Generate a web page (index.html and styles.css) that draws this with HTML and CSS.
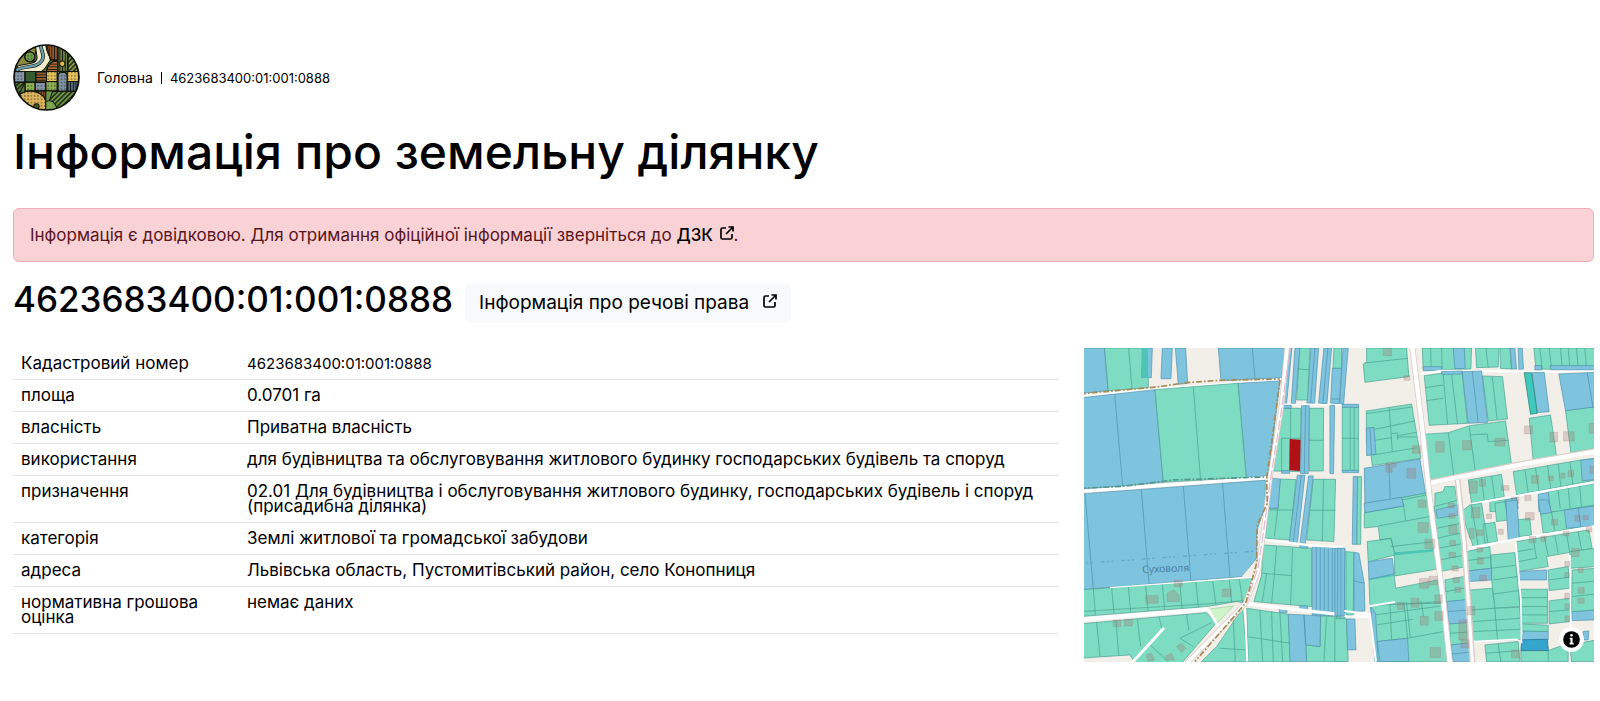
FILE: index.html
```html
<!DOCTYPE html>
<html lang="uk">
<head>
<meta charset="utf-8">
<title>Інформація про земельну ділянку</title>
<link rel="stylesheet" href="styles.css">
</head>
<body>
<svg class="defs" aria-hidden="true">
  <symbol id="external" viewBox="0 0 14 14"><path d="M6 2H2.500Q1 2 1 3.500V11.500Q1 13 2.500 13H10.500Q12 13 12 11.500V8M8.500 1H13V5.500M13 1L6 8" fill="none" stroke="currentColor" stroke-width="1.700"/></symbol>
</svg>
<header class="top">
  <a class="logo" href="#" aria-label="Головна сторінка">
    <svg viewBox="0 0 200 200">
      <defs>
        <clipPath id="disc"><circle cx="100" cy="100" r="97"/></clipPath>
        <pattern id="v" width="8" height="8" patternUnits="userSpaceOnUse"><path d="M4 0V8" stroke="#15180f" stroke-width="3"/></pattern>
        <pattern id="h" width="8" height="8" patternUnits="userSpaceOnUse"><path d="M0 4H8" stroke="#15180f" stroke-width="3"/></pattern>
        <pattern id="d" width="10" height="10" patternUnits="userSpaceOnUse" patternTransform="rotate(45)"><path d="M5 0V10" stroke="#15180f" stroke-width="4"/></pattern>
        <pattern id="p" width="10" height="10" patternUnits="userSpaceOnUse"><circle cx="5" cy="5" r="2" fill="#2a2f22"/></pattern>
      </defs>
      <g clip-path="url(#disc)" stroke="#14170f" stroke-width="3">
        <rect width="200" height="200" fill="#5b7a38"/>
        <path d="M0 80L30 20L70 10L60 60Z" fill="#8a8a3c"/>
        <circle cx="50" cy="38" r="15" fill="#6d9a48"/><circle cx="50" cy="38" r="15" fill="url(#p)"/>
        <path d="M66 0H100C94 18 112 32 112 48C100 62 98 80 80 84H8L14 66C38 54 70 66 72 40Z" fill="#f3ebcd"/>
        <path d="M84 0C80 20 98 30 86 50C70 74 40 62 10 78" fill="none" stroke="#14170f" stroke-width="11"/>
        <path d="M84 0C80 20 98 30 86 50C70 74 40 62 10 78" fill="none" stroke="#6c9fae" stroke-width="7"/>
        <path d="M100 0H134V48H112C110 32 94 20 100 0" fill="#a65d2e"/><path d="M100 0H134V48H112Z" fill="url(#v)"/>
        <path d="M100 82Q104 52 134 48V82Z" fill="#b56b35"/><path d="M100 82Q104 52 134 48V82Z" fill="url(#h)"/>
        <path d="M134 0H164V82H134Z" fill="#6f8545"/><path d="M134 0H164V82H134Z" fill="url(#v)"/><circle cx="147" cy="59" r="8" fill="#e0b850"/>
        <path d="M164 20L200 50V82H164Z" fill="#8c9a4a"/><path d="M164 20L200 50V82H164Z" fill="url(#d)"/>
        <path d="M0 82H36V114H0ZM66 114H98V140H66Z" fill="#8794ab"/><path d="M36 82H68V114H36Z" fill="#355c30"/>
        <path d="M68 82H100V114H68Z" fill="#9a6233"/><path d="M68 82H100V114H68Z" fill="url(#h)"/>
        <path d="M100 82H132V112H100ZM162 82H200V112H162Z" fill="#e7c25d"/>
        <path d="M36 114H66V140H36ZM98 112H132V140H98Z" fill="#8eb156"/>
        <path d="M0 82H36V114H0ZM36 114H66V140H36ZM66 114H98V140H66ZM98 112H132V140H98ZM100 82H132V112H100ZM162 82H200V112H162Z" fill="url(#p)"/>
        <rect x="134" y="84" width="28" height="62" rx="12" fill="#7c91a3"/><rect x="134" y="84" width="28" height="62" rx="12" fill="url(#p)"/>
        <path d="M162 112H200V142H162Z" fill="#55697d"/><path d="M162 112H200V142H162Z" fill="url(#v)"/>
        <path d="M70 140H98V165L70 148Z" fill="#a65d2e"/><path d="M70 140H98V165L70 148Z" fill="url(#v)"/>
        <path d="M0 114H36L20 146H0Z" fill="url(#d)"/>
        <path d="M20 150C54 128 98 148 98 176V200H30Z" fill="#dcb25a"/><path d="M20 150C54 128 98 148 98 176V200H30Z" fill="url(#p)"/>
        <circle cx="70" cy="186" r="8" fill="#425b2a"/>
        <path d="M98 140H200V200H98Z" fill="#6d9645"/><path d="M118 142H200V200H98Z" fill="url(#d)"/>
        <path d="M98 172Q122 160 134 200H98Z" fill="#7ba650"/>
      </g>
      <circle cx="100" cy="100" r="97" fill="none" stroke="#0b0d08" stroke-width="5"/>
    </svg>
  </a>
  <nav class="crumbs" aria-label="Навігація"><a href="#">Головна</a><span class="bar"></span><a class="code" href="#">4623683400:01:001:0888</a></nav>
</header>
<main>
  <h1>Інформація про земельну ділянку</h1>
  <div class="alert" role="alert">Інформація є довідковою. Для отримання офіційної інформації зверніться до <a href="#">ДЗК <svg class="ext"><use href="#external"/></svg></a>.</div>
  <div class="heading">
    <h2>4623683400:01:001:0888</h2>
    <a class="btn" href="#">Інформація про речові права <svg class="ext"><use href="#external"/></svg></a>
  </div>
  <div class="columns">
    <table class="info">
      <tbody>
      <tr><th scope="row">Кадастровий номер</th><td class="code">4623683400:01:001:0888</td></tr>
      <tr><th scope="row">площа</th><td>0.0701 га</td></tr>
      <tr><th scope="row">власність</th><td>Приватна власність</td></tr>
      <tr><th scope="row">використання</th><td>для будівництва та обслуговування житлового будинку господарських будівель та споруд</td></tr>
      <tr><th scope="row">призначення</th><td>02.01 Для будівництва і обслуговування житлового будинку, господарських будівель і споруд (присадибна ділянка)</td></tr>
      <tr><th scope="row">категорія</th><td>Землі житлової та громадської забудови</td></tr>
      <tr><th scope="row">адреса</th><td>Львівська область, Пустомитівський район, село Конопниця</td></tr>
      <tr><th scope="row">нормативна грошова оцінка</th><td>немає даних</td></tr>
      </tbody>
    </table>
    <div class="map">
      <svg class="plan" viewBox="0 0 1530 942" preserveAspectRatio="xMidYMid slice" role="img" aria-label="Карта ділянки">
        <rect width="1530" height="942" fill="#f2efe9"/>
        <!-- north-west -->
        <g transform="translate(-12 -9)">
          <path class="g" d="M73 9H200L205 100V128L84 137ZM146 9L156 131"/>
          <path class="b" d="M0 9H73L84 137L0 146ZM187 9H217L214 98L185 97ZM247 9H277L273 101H243ZM286 9H317L323 115L295 118ZM415 9H615L606 98L423 107ZM517 9L525 102"/>
          <path class="t" d="M187 9H203L205 98H185Z"/>
          <path class="road" d="M0 151L605 104" stroke-width="8"/>
          <path class="b" d="M0 159L225 134L250 412L128 423L0 432ZM104 147L128 423M474 115L600 108L565 393L499 398Z"/>
          <path class="g" d="M225 134L474 115L499 398L250 412ZM340 124L362 408"/>
          <path class="road" d="M0 440L567 398" stroke-width="9"/>
          <path class="b" d="M0 447L556 406L556 480L530 560V640L486 695L92 727L0 735ZM15 447L40 733M184 434L207 715M310 424L333 706M428 415L450 697"/>
          <path class="border" d="M0 147L230 126L320 113L420 106L600 102"/>
          <path class="border2" d="M0 430L130 424L280 405L560 396"/>
          <path class="fence" d="M0 656L520 619"/>
          <text class="place" x="187" y="684" transform="rotate(-2 187 684)">Суховоля</text>
          <path class="b" d="M622 9H636L620 175H608ZM645 9H660L646 178L634 176ZM693 9H716L704 175L681 174ZM705 9L692 174M732 9H755L741 176L716 174ZM744 9L729 175M757 70H785L778 176L752 174ZM755 162H780"/>
          <path class="g" d="M660 9H690L683 165H650ZM653 72L687 74M762 9H785V70H759Z"/>
          <path class="road" d="M600 178L790 180" stroke-width="5"/>
          <path class="g" d="M605 190H663L660 380L580 378L595 280ZM632 190V280M605 280V378M605 280H662M688 190H731L730 378H688ZM688 286H731"/>
          <path class="b" d="M665 182H688L685 386H662ZM677 182L673 386M750 181H764L761 386H750ZM610 181H634V190H610ZM605 377H629V385H605Z"/>
          <path d="M629 282L662 284L660 378L628 376Z" fill="#b11116"/>
          <path class="g" d="M601 402L648 404L630 585L556 580L565 490L594 490ZM594 490L583 575M558 495H640M700 403H767L762 590L680 585ZM731 403L727 590M690 496H767"/>
          <path class="b" d="M572 400L601 402L594 490H562ZM652 391H675L652 595L628 592ZM664 391L640 593M686 393H700L676 597L660 595Z"/>
        </g>
        <!-- south-west -->
        <g transform="translate(-12 456)">
          <path class="g" d="M550 135L695 145V320L522 305L545 225ZM590 140L583 225L575 310M638 145L632 315M545 220L635 227M560 222L547 305"/>
          <path class="b" d="M697 137L795 147V350L697 345ZM709 138V345M721 139V346M733 140V347M745 141V348M757 142V348M769 143V349M782 144V349M660 133H683V144H660ZM598 323H621V338H598ZM660 318H683V333H660Z"/>
          <path class="g" d="M0 270L525 233L500 310L470 305L380 320L0 350ZM40 267L46 345M95 263L102 340M145 260L152 336M197 256L204 333M247 252L254 330M300 249L306 326M348 245L355 322M398 242L408 316M448 239L455 307M478 237L488 307M0 335L380 312M380 312L495 302"/>
          <path class="road" d="M90 263L450 237L525 232" stroke-width="4"/>
          <path d="M487 228L530 178L522 233Z" fill="#f2efe9"/>
          <path d="M385 328L460 318L410 372Z" fill="#cdf5c8" stroke="#a6cfa4" stroke-width="2"/>
          <path class="g" d="M0 372L380 338L408 370L305 490H165L150 465L0 475ZM50 366L60 470M108 361L116 467M172 356L182 440M237 350L245 385M320 344L327 392M395 368L300 415M300 415L340 440M205 430L265 485"/>
          <path class="g" d="M488 325L503 485H365L410 440ZM460 360L466 485M418 445L500 450"/>
          <path class="g" d="M500 325L625 343L632 485H505ZM540 330L548 485M575 335L580 485M600 340L608 485M500 410L632 430M678 435L720 440L722 348L795 352V485H680ZM740 350L732 485M770 350L765 485"/>
          <path class="b" d="M625 343L672 345L680 485H630ZM672 345L722 348L720 440L678 435Z"/>
          <path class="road" d="M0 360L385 328" stroke-width="12"/>
          <path class="road" d="M553 119L690 136L790 142" stroke-width="7"/>
          <path class="road" d="M500 312L790 345L870 350" stroke-width="10"/>
          <path class="road" d="M495 320L502 485" stroke-width="6"/>
          <path class="road" d="M252 384L155 490" stroke-width="9"/>
          <path class="road" d="M385 328L415 380" stroke-width="8"/>
          <path class="case" d="M622 -465L605 -285L570 -65L550 100L535 210L497 310L320 490" stroke-width="16"/>
          <path class="road" d="M622 -465L605 -285L570 -65L550 100L535 210L497 310L320 490" stroke-width="11"/>
          <path class="pink" d="M632 -465L604 -265L570 -50L550 100L535 200L500 310"/>
          <path class="border" d="M600 -360L575 -170L560 -65L562 10L532 75L530 190L497 310L345 485"/>
          <path class="house" d="M197 287H234V310H197ZM262 280L280 270L298 285V305H262ZM283 240H307V260H283ZM427 268H454V290H427ZM100 360H122V380H100ZM134 358H157V378H134ZM290 440L305 430L318 446L304 458ZM198 465L215 460L224 480L205 485ZM257 468L275 460L284 480H260Z"/>
        </g>
        <!-- north-east -->
        <g transform="translate(753 -9)">
          <path class="b" d="M24 9H40L26 178L15 176Z"/>
          <path class="g" d="M95 9H215L222 95L90 112L85 57L95 50ZM90 54L218 40M22 186H71V378H22ZM46 180V383M58 180V383M22 280H71M94 198L230 177L258 340L112 362L108 330L95 290ZM94 206L232 186M163 187L172 320M95 258L240 228M95 290L170 278M170 266L188 264V284M188 276L245 276M190 272L245 262M115 330L247 308"/>
          <path class="b" d="M22 178H71V187H22ZM22 376H71V383H22ZM94 250L117 247L123 328L95 332ZM105 249L110 330M88 370L255 342L272 445L90 478ZM162 358L166 460M55 395H68L66 598H52Z"/>
          <path class="g" d="M68 395H80L77 598H66ZM90 478L200 458L272 445L276 490H200L90 502ZM200 458L210 500"/>
          <path class="g" d="M262 9H410L408 72L265 75ZM287 9L289 72M320 9L322 72M422 9H492L490 66L425 68ZM453 9L460 67M495 9H525L530 72L497 70ZM597 9H785V75L603 72ZM615 9L622 72M643 9L650 72M677 9L682 72M700 9L705 72M725 9L730 72M750 9L755 72"/>
          <path class="b" d="M355 9H388L391 70L360 71ZM265 65H320V77H265ZM527 9H540L545 72H530ZM550 9H562L566 72L552 73ZM645 62H785V75H650ZM600 62H620V75H600Z"/>
          <path class="road" d="M258 86L320 77L600 80L785 79" stroke-width="6"/>
          <path class="g" d="M268 92L320 85H382L398 235L283 241ZM325 90L338 237M350 88L368 238M270 128L325 120M275 167L325 160M443 93L503 95L518 222L460 228ZM472 95L487 225M583 220L647 210L665 333L595 346ZM692 197L785 184V310L708 323ZM268 268L340 263L405 242L512 228L530 360L285 412ZM340 263L357 395M403 245L422 385M405 270L457 267M457 267L460 290M460 290L522 286"/>
          <path class="b" d="M320 80L382 78V87L320 89ZM382 80L440 78L458 232L400 235ZM412 78L430 234M592 83L628 82L643 200L607 203ZM672 87L785 82V185L692 197ZM757 83L775 190"/>
          <path d="M568 83L590 83L607 205L587 208Z" fill="#3fc9bc" stroke="#23756e" stroke-width="2"/>
          <path class="g" d="M400 405L500 388L508 455L410 475ZM440 398L448 468M470 393L480 460M535 380L738 345L785 340V405L545 450ZM570 374L580 443M602 369L612 437M638 362L648 430M670 357L678 425M705 351L714 419M300 445L325 440L330 425L360 425L372 500H300ZM465 470L545 458V500H465ZM640 440L785 415V500H645ZM670 436L676 490M700 430L706 490M735 424L740 490"/>
          <path class="b" d="M738 346L785 340V403L742 408ZM610 448L640 442L648 500H612ZM510 465L545 459L550 490H512Z"/>
          <path class="case" d="M287 412L540 360L785 317" stroke-width="17"/>
          <path class="road" d="M287 414L540 362L785 319" stroke-width="13"/>
          <path class="road" d="M410 477L785 411" stroke-width="7"/>
          <path class="house" d="M145 10H170V32H145ZM207 92H225V106H207ZM233 302H258V325H233ZM153 354H184V366L172 368V382H153ZM216 371H243V400H216ZM303 290H328V322H303ZM383 287H409V315H383ZM480 280H510V303H480ZM569 243H593V266H569ZM645 262H668V291H645ZM686 260H718V288H686ZM763 235H790V265H763ZM403 408H427V445H403ZM434 404H452V424H434ZM590 392H611V415H590ZM570 450H588V467H570ZM500 422H522V436H500ZM640 394H655V407H640ZM700 377H716V395H700ZM530 456H552V475H530ZM678 385H690V400H678ZM765 363H785V385H765ZM250 465H272V490H250Z"/>
        </g>
        <!-- south-east -->
        <g transform="translate(753 456)">
          <path class="g" d="M88 38L208 18L200 0L275 -15L303 150L180 160L168 115L135 120L130 80L88 84ZM206 18L212 60M130 78L295 48M168 140L300 125M97 125L168 115L180 165L100 186ZM178 160L300 150L305 208L180 228ZM102 238L178 225L182 265L308 240L318 310L105 314ZM107 318L320 305L345 485H125ZM122 345L320 318M165 310L170 418M207 306L218 415M215 306L226 412M258 302L266 350M125 375L235 358M125 425L218 415M218 415L325 395M33 155L57 157L55 345H33ZM0 355L35 357L40 485H0Z"/>
          <path class="t" d="M178 158L300 148V154L178 167ZM102 234L178 222V228L102 240Z"/>
          <path class="b" d="M88 10L200 -8L206 18L90 38ZM100 186L172 175L178 222L102 238ZM107 320L122 340L130 485H120ZM127 425L218 415L222 485H135ZM57 157L72 160L88 250L90 333L57 335ZM57 243L88 250M35 357L60 358L63 450L38 450ZM0 145H30L28 348H0ZM8 145V348M18 145V348"/>
          <path class="g" d="M298 20L370 0L395 200L315 215ZM305 85L378 70M308 115L383 98M312 145L388 130M315 180L392 165M330 240L398 228L405 300L335 305ZM333 275L402 262M345 370L408 367L410 430L345 435ZM345 400L410 396"/>
          <path class="b" d="M303 30L368 15L370 45L308 55ZM335 305L405 298L410 367L342 372ZM338 335L408 330M348 435L412 428L415 485H355ZM352 462L414 456"/>
          <path class="g" d="M380 35L405 15L440 10L460 135L415 140L395 85ZM410 15L430 138M445 72L480 67L488 125L450 130ZM480 10L510 5L520 60L485 65ZM545 60L585 55L590 105L553 110ZM617 42L780 15V75L625 100ZM650 37L660 90M545 125L762 90L772 145L635 170L640 200L550 215ZM595 115L605 175M628 110L640 168M660 107L670 160M695 101L704 155M730 96L740 148M545 155L595 147M550 185L605 175M395 155L465 140L470 205L400 213ZM397 182L468 172M467 165L540 158L555 320L480 325L470 240ZM470 205L542 196M474 240L548 230M478 282L552 272"/>
          <path class="b" d="M513 5L547 0L553 115L520 120ZM610 0H640L650 38L617 42ZM688 30L780 18V78L695 85ZM730 25L738 82M400 213L470 205V240L403 245ZM550 215L635 210V240H550ZM565 393L640 395V420H562ZM710 335L785 330V360L712 362ZM745 395L762 393L760 420H745Z"/>
          <path class="g" d="M405 270L472 265L480 325L555 322L560 418L415 425ZM410 330L480 325M480 325L488 422M413 365L557 355M415 395L558 388M553 268H638V370H558ZM553 293H638M556 320H638M557 345H638M555 372L640 376V395L560 393ZM640 210L700 200L705 265L643 272ZM641 240L703 232M643 303L705 295V365L643 372ZM643 335L705 330M705 155L785 145V200L705 205ZM712 210L785 205V330L710 335ZM712 250L785 243M712 290L785 282M450 435L550 425L555 485H455ZM490 430L498 485M453 460L552 452M558 452L640 452L700 430V485H558ZM640 440V485M705 435L785 420V485H710Z"/>
          <path d="M560 420L638 418L640 452H558Z" fill="#36a5cd" stroke="#23718f" stroke-width="2"/>
          <path class="road" d="M400 145L560 115L785 78" stroke-width="7"/>
          <path class="road" d="M543 125L558 300L560 430M705 165L708 440M415 425L550 418" stroke-width="5"/>
          <path class="road" d="M28 333L105 342L123 485M105 318L180 306" stroke-width="6"/>
          <path class="case" d="M232 -460L262 -215L285 0L325 300L345 490M368 -62L388 130L413 490" stroke-width="18"/>
          <path class="road" d="M232 -460L262 -215L285 0L325 300L345 490" stroke-width="13"/>
          <path class="road" d="M368 -62L388 130L413 490" stroke-width="9"/>
          <path class="house" d="M250 0H274V22H250ZM250 68H280V98H250ZM270 118H300V146H270ZM254 236H281V265H254ZM283 229H308V255H283ZM228 295H252V322H228ZM187 308H207V328H187ZM300 285H322V310H300ZM300 335H325V362H300ZM256 350H280V376H256ZM286 443H317V473H286ZM340 10H358V24H340ZM342 40H360V55H342ZM342 75H366V102H342ZM345 122H362V137H345ZM342 158H362V173H342ZM352 198H370V213H352ZM355 233H373V248H355ZM360 262H378V277H360ZM372 360H396V420H372ZM398 320H420V345H398ZM378 420H402V444H378ZM410 22H435V54H410ZM425 90H443V107H425ZM490 88H505V103H490ZM572 38H598V60H572ZM403 85H417V115H403ZM427 142H444V156H427ZM427 173H445V192H427ZM434 226H455V243H434ZM455 42H470V56H455ZM583 110H603V128H583ZM618 108H634V124H618ZM650 58H668V75H650ZM685 94H702V108H685ZM720 47H736V64H720ZM745 46H760V60H745ZM710 145H733V170H710ZM690 185H704V200H690ZM690 218H704V233H690ZM690 280H704V297H690ZM690 312H704V328H690ZM690 348H704V365H690ZM730 263H748V280H730ZM730 295H748V310H730ZM530 450H553V473H530ZM730 205H745V218H730ZM755 80H770V96H755Z"/>
        </g>
      </svg>
      <button class="attrib" type="button" aria-label="Про карту"><svg viewBox="0 0 24 24"><circle cx="12" cy="12" r="8" fill="#000"/><path d="M12 6.600a1.300 1.300 0 1 1 0 2.600a1.300 1.300 0 1 1 0-2.600M10.200 10.300H13V15H14V16.700H10.200V15H11V11.800H10.200Z" fill="#fff"/></svg></button>
    </div>
  </div>
</main>
</body>
</html>
```
FILE: styles.css
```css
* { box-sizing: border-box; }
body { margin: 0; padding: 44px 6px 38px 13px; background: #fff; color: #000; font: 17px/15px Inter, "Noto Sans", sans-serif; }
a { color: inherit; text-decoration: none; }
h1, h2 { margin: 0; font-weight: 500; }
.defs { display: none; }
.top { display: flex; align-items: center; gap: 17px; }
.logo, .logo svg { display: block; width: 67px; height: 67px; }
.crumbs { display: flex; align-items: center; gap: 8px; font-size: 14px; line-height: 20px; }
.crumbs .code { font-size: 13px; }
.bar { width: 1px; height: 12px; background: #000; }
h1 { margin-top: 13px; font-size: 48px; line-height: 56px; }
.alert { margin-top: 28px; padding: 16px; border: 1px solid #f1aeb5; border-radius: 6px; background: #f9d2d6; color: #58151c; line-height: 20px; }
.alert a { color: #000; font-weight: 500; }
.ext { width: 14px; height: 14px; margin-left: 2px; vertical-align: 1px; }
.heading { display: flex; align-items: flex-start; gap: 12px; margin-top: 21px; }
h2 { font-size: 35px; line-height: 32px; }
.btn { padding: 8px 14px; border-radius: 6px; background: #f8f9fa; font-size: 19px; line-height: 24px; }
.btn .ext { margin-left: 8px; }
.columns { display: grid; grid-template-columns: 41fr 20fr; gap: 26px; align-items: start; margin-top: 25px; }
.info { width: 100%; border-collapse: collapse; }
.info th, .info td { padding: 8px; border-bottom: 1px solid #dee2e6; font-weight: 400; text-align: left; vertical-align: top; }
.info th { width: 226px; }
.info .code { font-size: 15px; }
.map { position: relative; }
.plan { display: block; width: 100%; height: auto; }
.attrib { position: absolute; right: 10px; bottom: 10px; width: 25px; height: 25px; padding: 0; border: 0; border-radius: 50%; background: #fff; }
.attrib svg { display: block; width: 25px; height: 25px; }
.g { fill: #7ddcc1; stroke: #489f91; stroke-width: 2; }
.b { fill: #7fc4de; stroke: #4d8fac; stroke-width: 2; }
.t { fill: #4fc5b6; }
.road { fill: none; stroke: #fff; }
.case { fill: none; stroke: #dccfc9; }
.pink { fill: none; stroke: #e3bfd3; stroke-width: 4; stroke-dasharray: 30 8; }
.border { fill: none; stroke: #a58b58; stroke-width: 5; stroke-dasharray: 18 6 5 6; }
.border2 { fill: none; stroke: #54988c; stroke-width: 5; stroke-dasharray: 18 6 5 6; }
.fence { fill: none; stroke: #6ca6c6; stroke-width: 4; stroke-dasharray: 12 7 6 7 6 24; }
.place { fill: #4d81a8; font: 31px "Noto Sans", sans-serif; }
.house { fill: #a0706a; fill-opacity: .28; stroke: #a0706a; stroke-opacity: .35; stroke-width: 2; }
```
